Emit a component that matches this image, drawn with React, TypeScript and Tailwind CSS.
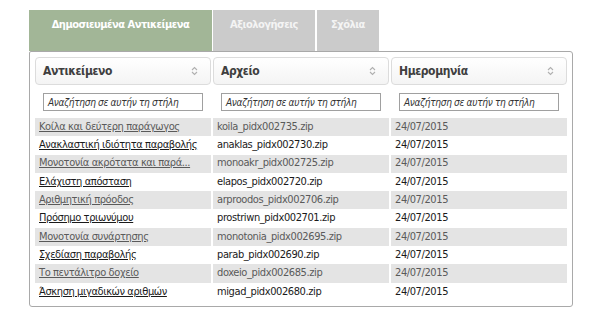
import React from "react";

const rows = [
  ["Κοίλα και δεύτερη παράγωγος", "koila_pidx002735.zip"],
  ["Ανακλαστική ιδιότητα παραβολής", "anaklas_pidx002730.zip"],
  ["Μονοτονία ακρότατα και παρά...", "monoakr_pidx002725.zip"],
  ["Ελάχιστη απόσταση", "elapos_pidx002720.zip"],
  ["Αριθμητική πρόοδος", "arproodos_pidx002706.zip"],
  ["Πρόσημο τριωνύμου", "prostriwn_pidx002701.zip"],
  ["Μονοτονία συνάρτησης", "monotonia_pidx002695.zip"],
  ["Σχεδίαση παραβολής", "parab_pidx002690.zip"],
  ["Το πεντάλιτρο δοχείο", "doxeio_pidx002685.zip"],
  ["Άσκηση μιγαδικών αριθμών", "migad_pidx002680.zip"],
];

function SortIcon() {
  return (
    <svg width="7" height="10" viewBox="0 0 7 10" className="shrink-0">
      <path d="M1 4 L3.5 1.5 L6 4" fill="none" stroke="#b0b0b0" strokeWidth="1.1" />
      <path d="M1 6 L3.5 8.5 L6 6" fill="none" stroke="#b0b0b0" strokeWidth="1.1" />
    </svg>
  );
}

const headers = ["Αντικείμενο", "Αρχείο", "Ημερομηνία"];

export default function App() {
  return (
    <div
      className="w-[616px] h-[320px] bg-white pt-[10px] pl-[29px] font-stretch-condensed"
      style={{ fontFamily: "'DejaVu Sans', Verdana, sans-serif" }}
    >
      <div className="flex h-[41px] items-stretch font-bold text-[11px] tracking-[-0.5px]">
        <div className="w-[183px] bg-[#a2b697] text-white flex justify-center pt-[7px]">
          Δημοσιευμένα Αντικείμενα
        </div>
        <div className="ml-[1px] w-[102px] bg-[#cbcbcb] text-[#f4f4f4] flex justify-center pt-[7px]">
          Αξιολογήσεις
        </div>
        <div className="ml-[2px] w-[62px] bg-[#cbcbcb] text-[#f4f4f4] flex justify-center pt-[7px]">
          Σχόλια
        </div>
      </div>
      <div className="w-[544px] h-[256px] border border-[#a9a9a9] rounded-[3px] rounded-tl-[2px] px-[5px] pt-[5px]">
        <div className="grid grid-cols-[176px_176px_176px] gap-x-[2px]">
          {headers.map((h) => (
            <div
              key={h}
              className="h-[28px] rounded-[4px] border border-[#dcdcdc] bg-gradient-to-b from-white to-[#f4f4f4] flex items-center justify-between pl-[7px] pr-[12px]"
            >
              <span className="font-bold text-[12px] tracking-[-0.4px] text-[#3f3f3f]">{h}</span>
              <SortIcon />
            </div>
          ))}
        </div>
        <div className="grid grid-cols-[176px_176px_176px] gap-x-[2px] mt-[8px]">
          {headers.map((h) => (
            <div key={h} className="pl-[8px] pr-[8px]">
              <div className="h-[18px] border border-[#a0a0a0] bg-white flex items-center pl-[4px] italic text-[10px] tracking-[-0.3px] text-[#333] whitespace-nowrap overflow-hidden">
                Αναζήτηση σε αυτήν τη στήλη
              </div>
            </div>
          ))}
        </div>
        <div className="mt-[7px] flex flex-col text-[11px] tracking-[-0.4px]">
          {rows.map(([a, b], i) => {
            const odd = i % 2 === 0;
            const color = odd ? "text-[#5a5a5a]" : "text-[#1a1a1a]";
            const bg = odd ? "bg-[#e4e4e4]" : "bg-white";
            return (
              <div key={b} className="grid grid-cols-[176px_176px_176px] gap-x-[2px] h-[18.3px]">
                <div className={`${bg} pl-[4px] flex items-center whitespace-nowrap overflow-hidden`}>
                  <span className={`${color} underline`}>{a}</span>
                </div>
                <div className={`${bg} ${color} pl-[4px] flex items-center whitespace-nowrap`}>{b}</div>
                <div className={`${bg} ${color} pl-[4px] flex items-center whitespace-nowrap`}>24/07/2015</div>
              </div>
            );
          })}
        </div>
      </div>
    </div>
  );
}
